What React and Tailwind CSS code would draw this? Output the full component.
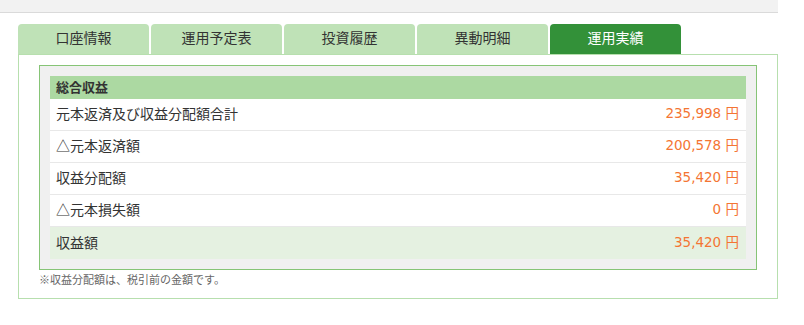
const tabs = ["口座情報", "運用予定表", "投資履歴", "異動明細", "運用実績"];

const rows = [
  { label: "元本返済及び収益分配額合計", value: "235,998" },
  { label: "△元本返済額", value: "200,578" },
  { label: "収益分配額", value: "35,420" },
  { label: "△元本損失額", value: "0" },
];

function Amount({ value }) {
  return (
    <span className="text-[#f47533] pr-[1px] font-['DejaVu_Sans','Noto_Sans_CJK_JP',sans-serif] text-[13.5px]">
      {value} 円
    </span>
  );
}

export default function App() {
  return (
    <div className="w-[804px] h-[325px] bg-white text-[#333] font-['Noto_Sans_CJK_JP',sans-serif]">
      <div className="w-[778px] h-[13px] bg-[#f2f2f2] border-b border-[#dadada]" />

      <div className="ml-[18px] mt-[11px] w-[760px]">
        <ul className="flex gap-[2px] h-[30px]">
          {tabs.map((t, i) => (
            <li
              key={t}
              className={
                i === tabs.length - 1
                  ? "w-[131px] rounded-t-[4px] bg-[#339139] text-white flex items-center justify-center pb-[3px] text-[14px]"
                  : "w-[131px] rounded-t-[4px] bg-[#bfe2b7] text-[#333] flex items-center justify-center pb-[3px] text-[14px]"
              }
            >
              {t}
            </li>
          ))}
        </ul>

        <div className="border border-[#b7dfae] px-[20px] pt-[10px] pb-[11px]">
          <div className="border border-[#86c476] bg-[#f0f0f0] p-[10px]">
            <div className="h-[23px] bg-[#acd9a2] px-[6px] pb-[2px] flex items-center text-[13px] font-bold">
              総合収益
            </div>
            {rows.map((r) => (
              <div
                key={r.label}
                className="h-[32px] bg-white border-b border-[#e8e8e8] px-[6px] pb-[3px] flex items-center justify-between text-[14px]"
              >
                <span>{r.label}</span>
                <Amount value={r.value} />
              </div>
            ))}
            <div className="h-[32px] bg-[#e5f1e1] px-[6px] pb-[2px] flex items-center justify-between text-[14px]">
              <span>収益額</span>
              <Amount value="35,420" />
            </div>
          </div>
          <p className="mt-[1px] text-[11px] leading-[16px] text-[#666]">
            ※収益分配額は、税引前の金額です。
          </p>
        </div>
      </div>
    </div>
  );
}
